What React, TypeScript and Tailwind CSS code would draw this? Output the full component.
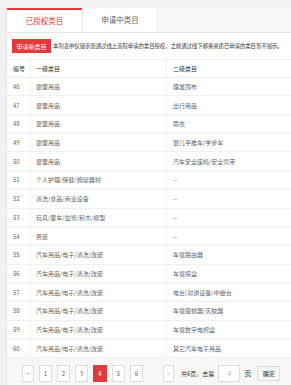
import React from "react";

const rows: [string, string, string][] = [
  ["46", "婴童用品", "理发围布"],
  ["47", "婴童用品", "出行用品"],
  ["48", "婴童用品", "雨衣"],
  ["49", "婴童用品", "婴儿手推车/学步车"],
  ["50", "婴童用品", "汽车安全座椅/安全背带"],
  ["51", "个人护理/保健/按摩器材", "--"],
  ["52", "清洗/食品/商业设备", "--"],
  ["53", "玩具/童车/益智/积木/模型", "--"],
  ["54", "男装", "--"],
  ["55", "汽车用品/电子/清洗/改装", "车载路由器"],
  ["56", "汽车用品/电子/清洗/改装", "车载探盒"],
  ["57", "汽车用品/电子/清洗/改装", "电台/对讲设备/中继台"],
  ["58", "汽车用品/电子/清洗/改装", "车载驱蚊器/灭蚊器"],
  ["59", "汽车用品/电子/清洗/改装", "车载数字电视盒"],
  ["60", "汽车用品/电子/清洗/改装", "其它汽车电子用品"],
];

const pages = ["1", "2", "3", "4", "5", "6"];

export default function App() {
  return (
    <div
      className="w-[291px] h-[385px] overflow-hidden bg-[#f2f2f2] pt-[8px] pl-[6px]"
      style={{ fontFamily: '"Noto Sans CJK SC", "Noto Sans", sans-serif' }}
    >
      <div className="w-[300px] bg-white border-l border-[#e6e6e6]">
        {/* tabs */}
        <div className="flex h-[25px] bg-[#f7f7f7] border-b border-[#e8e8e8]">
          <div className="w-[75px] bg-white border-t-2 border-[#e2393c] flex items-center justify-center text-[7.5px] text-[#e2393c]">
            已授权类目
          </div>
          <div className="w-[76px] bg-white border-l border-r border-[#eaeaea] flex items-center justify-center text-[7.5px] text-[#666]">
            申请中类目
          </div>
        </div>

        {/* notice */}
        <div className="flex items-center h-[26px] pl-[5px]">
          <button className="w-[39px] h-[14px] bg-[#e2393c] text-white text-[6px] flex items-center justify-center shrink-0">
            申请新类目
          </button>
          <span className="ml-[2px] text-[5.4px] tracking-[-0.05px] text-[#333] whitespace-nowrap">
            本列表中仅展示您通过线上流程申请的类目授权，之前通过线下邮寄资质已申请的类目暂不展示。
          </span>
        </div>

        {/* table */}
        <div className="text-[6px]">
          <div className="flex h-[18.7px] items-center border-t border-b border-[#eeeeee] text-[#333]">
            <div className="w-[24px] pl-[6px] h-full flex items-center border-r border-[#eeeeee]">编号</div>
            <div className="w-[136px] pl-[5px] h-full flex items-center border-r border-[#eeeeee]">一级类目</div>
            <div className="flex-1 pl-[6px] h-full flex items-center">二级类目</div>
          </div>
          {rows.map(([id, a, b]) => (
            <div
              key={id}
              className="flex h-[18.7px] items-center border-b border-[#f0f0f0] text-[#666]"
            >
              <div className="w-[24px] pl-[6px] h-full flex items-center border-r border-[#f2f2f2]">{id}</div>
              <div className="w-[136px] pl-[5px] h-full flex items-center border-r border-[#f2f2f2]">{a}</div>
              <div className="flex-1 pl-[6px] h-full flex items-center">{b}</div>
            </div>
          ))}
        </div>

        {/* pagination */}
        <div className="flex items-center h-[30px] bg-[#f7f7f7] pl-[15px] text-[6px] text-[#666]">
          <div className="w-[12px] h-[17px] border border-[#dddddd] bg-white flex items-center justify-center text-[#aaa]">
            &lt;
          </div>
          {pages.map((p) => (
            <div
              key={p}
              className={
                p === "4"
                  ? "ml-[5px] w-[14px] h-[17px] bg-[#e2393c] text-white flex items-center justify-center"
                  : "ml-[5px] w-[13px] h-[17px] border border-[#dddddd] bg-white flex items-center justify-center"
              }
            >
              {p}
            </div>
          ))}
          <div className="ml-[20px] w-[11px] h-[17px] border border-[#dddddd] bg-white flex items-center justify-center text-[#aaa]">
            &gt;
          </div>
          <span className="ml-[7px] whitespace-nowrap text-[#333]">共6页，去第</span>
          <div className="ml-[4px] w-[22px] h-[17px] border border-[#dddddd] bg-white flex items-center justify-center text-[#aaa]">
            4
          </div>
          <span className="ml-[4px] text-[7px] text-[#333]">页</span>
          <div className="ml-[6px] w-[23px] h-[15px] border border-[#dddddd] bg-[#f5f5f5] flex items-center justify-center text-[#333]">
            确定
          </div>
        </div>
      </div>
    </div>
  );
}
